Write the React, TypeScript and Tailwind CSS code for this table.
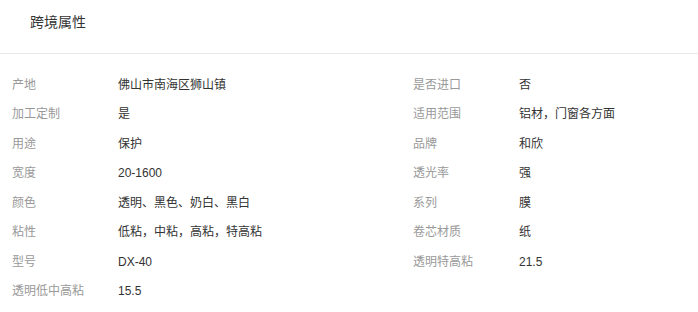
const left: [string, string][] = [
  ["产地", "佛山市南海区狮山镇"],
  ["加工定制", "是"],
  ["用途", "保护"],
  ["宽度", "20-1600"],
  ["颜色", "透明、黑色、奶白、黑白"],
  ["粘性", "低粘，中粘，高粘，特高粘"],
  ["型号", "DX-40"],
  ["透明低中高粘", "15.5"],
];

const right: [string, string][] = [
  ["是否进口", "否"],
  ["适用范围", "铝材，门窗各方面"],
  ["品牌", "和欣"],
  ["透光率", "强"],
  ["系列", "膜"],
  ["卷芯材质", "纸"],
  ["透明特高粘", "21.5"],
];

function Attr({ label, value }: { label: string; value: string }) {
  return (
    <div className="flex h-[29.5px] items-center text-[12px] leading-none">
      <span className="w-[106px] shrink-0 text-[#999999]">{label}</span>
      <span className="text-[#333333]">{value}</span>
    </div>
  );
}

export default function App() {
  return (
    <div
      className="h-[312px] w-[698px] bg-white"
      style={{ fontFamily: '"Liberation Sans", "Noto Sans CJK SC", sans-serif' }}
    >
      <div className="h-[54px] border-b border-[#e8e8e8] pl-[30px] pt-[14px] text-[14px] leading-[16px] text-[#333333]">
        跨境属性
      </div>
      <div className="flex pl-[12px] pt-[16px]">
        <div className="w-[401px] shrink-0">
          {left.map(([l, v]) => (
            <Attr key={l} label={l} value={v} />
          ))}
        </div>
        <div className="flex-1">
          {right.map(([l, v]) => (
            <Attr key={l} label={l} value={v} />
          ))}
        </div>
      </div>
    </div>
  );
}
